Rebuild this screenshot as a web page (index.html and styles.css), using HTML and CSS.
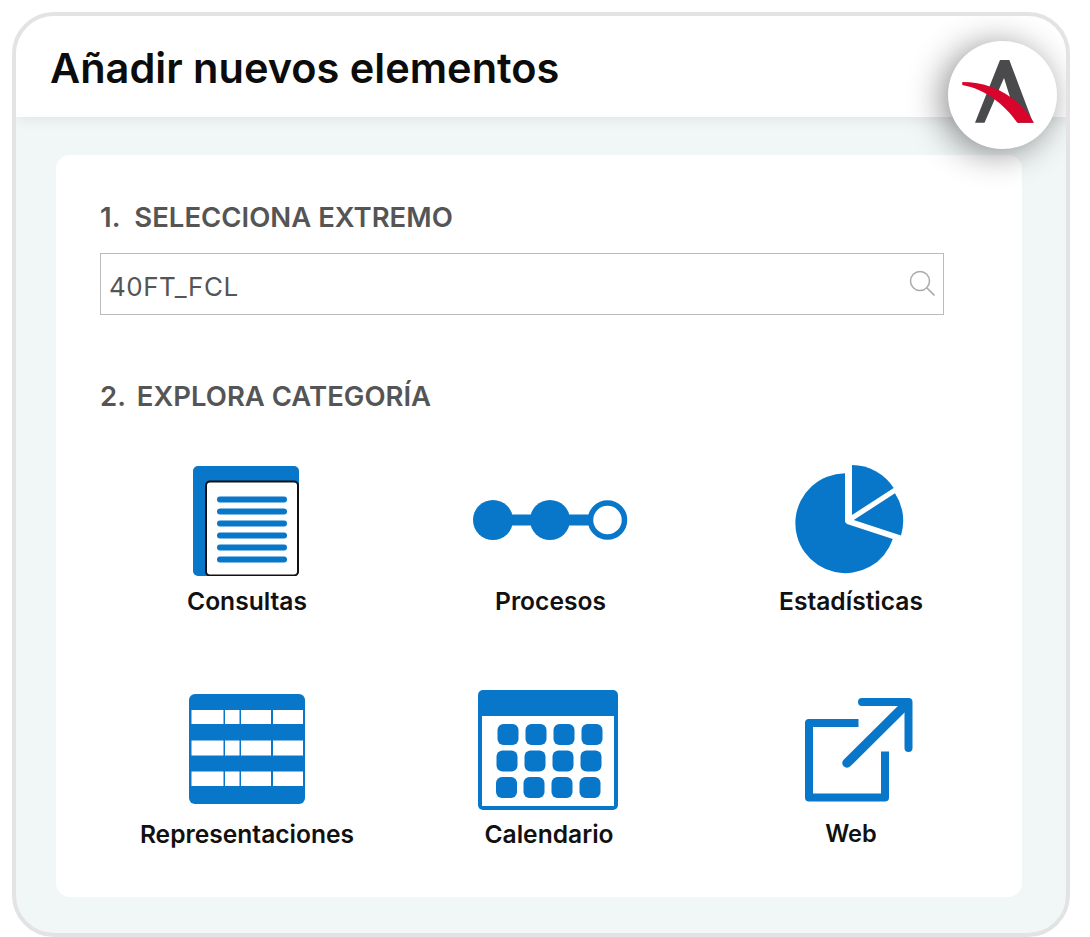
FILE: index.html
```html
<!DOCTYPE html>
<html lang="es">
<head>
    <meta charset="UTF-8">
    <meta content="width=device-width, initial-scale=1.0" name="viewport">
    <title>Añadir nuevos elementos</title>
    <link rel="stylesheet" href="styles.css">
</head>
<body>
<div class="shell">
    <header class="top">
        <h1>Añadir nuevos elementos</h1>
    </header>
    <div class="logo">
        <svg width="110" height="110" viewBox="948 41 110 110">
            <path fill="#4a4a4c" d="M975 122.7 L1000 60 H1009.3 L1033 122.7 H1018 L1004 78 L984.5 122.7 Z"/>
            <path fill="#d9042b" d="M962.3 82 C990 82 1018 95 1034 122.7 H1017.3 C1004 104 985 89 962.3 85 Z"/>
        </svg>
    </div>
    <main class="body">
        <section class="card">
            <div class="form">
                <h2 class="step"><span class="num num-1">1.</span> SELECCIONA EXTREMO</h2>
                <div class="search">
                    <span class="search-text">40FT_FCL</span>
                    <svg width="28" height="28" viewBox="0 0 28 28">
                        <circle cx="11" cy="11" r="9.5" fill="none" stroke="#aaa" stroke-width="1.5"/>
                        <path d="M18 18 L25.5 25.5" stroke="#aaa" stroke-width="1.7"/>
                    </svg>
                </div>
                <h2 class="step step-2"><span class="num">2.</span> EXPLORA CATEGORÍA</h2>
            </div>
            <div class="grid">
                <a class="item">
                    <svg class="nudge-left" width="106" height="110" viewBox="193 466 106 110">
                        <rect class="blue" x="193" y="466" width="106" height="110" rx="5"/>
                        <rect x="206" y="481.5" width="92" height="94" rx="4" fill="#fff" stroke="#111" stroke-width="2"/>
                        <g class="blue">
                            <rect x="217" y="496.5" width="70" height="6" rx="3"/>
                            <rect x="217" y="508.5" width="70" height="6" rx="3"/>
                            <rect x="217" y="520.5" width="70" height="6" rx="3"/>
                            <rect x="217" y="532.5" width="70" height="6" rx="3"/>
                            <rect x="217" y="544.5" width="70" height="6" rx="3"/>
                            <rect x="217" y="556.5" width="70" height="6" rx="3"/>
                        </g>
                    </svg>
                    <span>Consultas</span>
                </a>
                <a class="item">
                    <svg class="icon-steps" width="156" height="42" viewBox="472 499 156 42">
                        <rect class="blue" x="493" y="514.5" width="100" height="11"/>
                        <circle class="blue" cx="493" cy="520" r="20"/>
                        <circle cx="607.5" cy="520" r="17" fill="#fff" stroke="#0877c9" stroke-width="5.5"/>
                        <circle class="blue" cx="550" cy="520" r="20"/>
                    </svg>
                    <span>Procesos</span>
                </a>
                <a class="item">
                    <svg class="nudge-left" width="110" height="112" viewBox="794 464 110 112">
                        <path class="blue" d="M844 473.2 A50 50 0 1 0 891.8 539 L846 524 L844 522 Z"/>
                        <path class="blue" d="M851 465 A50 50 0 0 1 892.7 488 L851 515 Z"/>
                        <path class="blue" d="M852.7 520 L894 493.3 A50 50 0 0 1 900 535.5 Z"/>
                    </svg>
                    <span>Estadísticas</span>
                </a>
                <a class="item">
                    <svg class="icon-table" width="116" height="110" viewBox="189 693.5 116 110">
                        <rect class="blue" x="189" y="693.5" width="116" height="110" rx="6"/>
                        <g fill="#fff">
                            <rect x="191.5" y="709.5" width="32" height="14"/>
                            <rect x="225" y="709.5" width="14.5" height="14"/>
                            <rect x="241" y="709.5" width="30" height="14"/>
                            <rect x="273" y="709.5" width="30" height="14"/>
                            <rect x="191.5" y="740" width="32" height="15"/>
                            <rect x="225" y="740" width="14.5" height="15"/>
                            <rect x="241" y="740" width="30" height="15"/>
                            <rect x="273" y="740" width="30" height="15"/>
                            <rect x="191.5" y="771" width="32" height="14.5"/>
                            <rect x="225" y="771" width="14.5" height="14.5"/>
                            <rect x="241" y="771" width="30" height="14.5"/>
                            <rect x="273" y="771" width="30" height="14.5"/>
                        </g>
                    </svg>
                    <span>Representaciones</span>
                </a>
                <a class="item">
                    <svg class="icon-cal" width="140" height="120" viewBox="478 689.5 140 120">
                        <rect class="blue" x="478" y="689.5" width="140" height="120" rx="5"/>
                        <rect x="482" y="715.5" width="132" height="90" fill="#fff"/>
                        <g class="blue">
                            <rect x="497.5" y="723.5" width="21" height="21" rx="6"/>
                            <rect x="525.5" y="723.5" width="21" height="21" rx="6"/>
                            <rect x="553.5" y="723.5" width="21" height="21" rx="6"/>
                            <rect x="581.5" y="723.5" width="21" height="21" rx="6"/>
                            <rect x="496.5" y="750" width="21" height="21" rx="6"/>
                            <rect x="524.5" y="750" width="21" height="21" rx="6"/>
                            <rect x="552.5" y="750" width="21" height="21" rx="6"/>
                            <rect x="580.5" y="750" width="21" height="21" rx="6"/>
                            <rect x="496" y="776.5" width="21" height="21" rx="6"/>
                            <rect x="523.5" y="776.5" width="21" height="21" rx="6"/>
                            <rect x="551.5" y="776.5" width="21" height="21" rx="6"/>
                            <rect x="579.5" y="776.5" width="21" height="21" rx="6"/>
                        </g>
                    </svg>
                    <span>Calendario</span>
                </a>
                <a class="item">
                    <svg class="icon-web" width="110" height="106" viewBox="804 697 110 106">
                        <g fill="none" stroke="#0877c9" stroke-width="8" stroke-linejoin="round">
                            <path d="M858.5 723 H809 V797.5 H885 V751.5"/>
                            <path stroke-linecap="round" d="M862 702 H908.5 V748"/>
                            <path stroke-linecap="round" stroke-width="9.5" d="M905 705.5 L847 763"/>
                        </g>
                    </svg>
                    <span class="label-web">Web</span>
                </a>
            </div>
        </section>
    </main>
</div>
</body>
</html>
```

FILE: styles.css
```css
* {
    box-sizing: border-box;
}

html,
body {
    margin: 0;
    background: #fff;
}

body {
    padding: 12px 20px 0 12px;
    height: 937px;
    overflow: hidden;
    font-family: Inter, "Liberation Sans", sans-serif;
}

.shell {
    position: relative;
    display: flex;
    flex-direction: column;
    height: 925px;
    border: 4px solid #e3e3e3;
    border-radius: 42px;
    background: #f1f6f7;
    overflow: hidden;
}

.top {
    height: 101px;
    padding: 0 0 0 34px;
    display: flex;
    align-items: center;
    background: #fff;
    box-shadow: 0 2px 14px rgba(0, 0, 0, 0.08);
}

.top h1 {
    margin: 2px 0 0;
    font-size: 41.5px;
    font-weight: 600;
    color: #0c0c0c;
}

.logo {
    position: absolute;
    top: 25px;
    right: 9px;
    z-index: 2;
    width: 109px;
    height: 108px;
    border-radius: 50%;
    background: #fff;
    box-shadow: -6px 4px 34px rgba(0, 0, 0, 0.45);
}

.logo svg {
    display: block;
}

.body {
    padding: 38px 44px 36px 40px;
    flex: 1;
}

.card {
    height: 742px;
    border-radius: 14px;
    background: #fff;
}

.form {
    padding: 44px 78px 0 44px;
}

.step {
    margin: 0 0 18px;
    font-size: 27.5px;
    line-height: 36px;
    font-weight: 600;
    color: #555;
}

.step-2 {
    margin: 63px 0 0;
}

.num {
    margin-right: 4px;
}

.num-1 {
    margin-right: 7px;
}

.search {
    display: flex;
    align-items: center;
    justify-content: space-between;
    height: 62px;
    padding: 4px 6px 0 8px;
    border: 1px solid #bbb;
}

.search svg {
    margin-bottom: 4px;
}

.search-text {
    font-size: 26px;
    letter-spacing: 0.5px;
    color: #555;
}

.grid {
    display: grid;
    grid-template-columns: repeat(3, 302px);
    grid-template-rows: 202px 233px;
    padding: 0 20px 0 40px;
}

.item {
    display: flex;
    flex-direction: column;
    align-items: center;
    justify-content: flex-end;
}

.item svg {
    display: block;
    margin-bottom: 10px;
}

.item .nudge-left {
    margin-right: 2px;
}

.item .icon-cal {
    margin: 0 2px 9.5px 0;
}

.item .icon-steps {
    margin: 0 0 45px 2px;
}

.item .icon-steps + span {
    margin-left: 3px;
}

.item .icon-table {
    margin-bottom: 15.5px;
}

.item .icon-web {
    margin: 0 0 16px 16px;
}

.item span {
    font-size: 24.6px;
    line-height: 30px;
    font-weight: 600;
    color: #111;
}

.item .label-web {
    font-size: 23.6px;
}

.blue {
    fill: #0877c9;
}
```
